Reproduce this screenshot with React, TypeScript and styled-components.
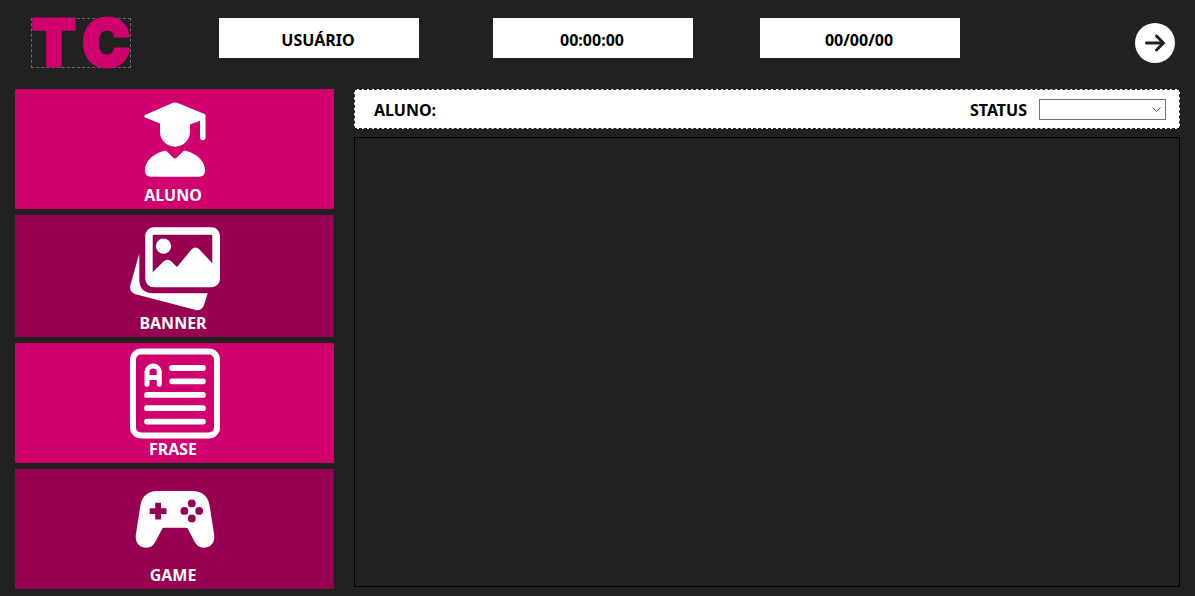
import React from "react";
import styled, { createGlobalStyle } from "styled-components";

const GlobalStyle = createGlobalStyle`
  *, *::before, *::after { box-sizing: border-box; }
  body {
    margin: 0;
    background: #212121;
    font-family: "Noto Sans", "Open Sans", sans-serif;
    font-size: 16px;
    line-height: 22px;
    font-weight: 700;
    color: #000;
  }
  button, select { font: inherit; color: inherit; }
`;

const Page = styled.div`
  display: flex;
  flex-direction: column;
  gap: 21px;
  min-height: 100vh;
  padding: 18px 15px 7px;
`;

const Header = styled.header`
  display: flex;
  align-items: flex-start;
  padding: 0 5px 0 16px;
`;

const Logo = styled.div`
  display: flex;
  align-items: center;
  justify-content: space-between;
  width: 100px;
  height: 50px;
  margin-right: 88px;
  border: 1px dashed #6c6c6c;
  color: #d1006f;
  font-family: Inter, sans-serif;
  font-size: 64px;
  font-weight: 900;
  line-height: 48px;
  -webkit-text-stroke: 3px #d1006f;
`;

const Field = styled.div<{ $gap: number }>`
  display: flex;
  align-items: center;
  justify-content: center;
  width: 200px;
  height: 40px;
  margin-right: ${(p) => p.$gap}px;
  padding: 3px 2px 0 0;
  background: #fff;
`;

const ExitButton = styled.button`
  display: flex;
  align-items: center;
  justify-content: center;
  width: 40px;
  height: 40px;
  margin: 5px 0 0 auto;
  padding: 0;
  border: 0;
  border-radius: 50%;
  background: #fff;
  color: #212121;
  cursor: pointer;
`;

const Body = styled.div`
  display: grid;
  grid-template-columns: 319px 1fr;
  gap: 20px;
`;

const Sidebar = styled.nav`
  display: flex;
  flex-direction: column;
  gap: 6px;
`;

const Tile = styled.button<{ $dark?: boolean; $top?: number }>`
  display: flex;
  flex-direction: column;
  align-items: center;
  padding: ${(p) => p.$top ?? 5}px 3px 3px 0;
  border: 0;
  background: ${(p) => (p.$dark ? "#980051" : "#d1006f")};
  color: #fff;
  cursor: pointer;
`;

const TileIcon = styled.svg`
  display: block;
  width: 90px;
  height: 90px;
  margin-left: 3px;
  overflow: visible;
`;

const Main = styled.main`
  display: flex;
  flex-direction: column;
  gap: 8px;
  padding-bottom: 2px;
`;

const StudentBar = styled.div`
  display: flex;
  align-items: center;
  justify-content: space-between;
  height: 40px;
  padding: 1px 13px 0 19px;
  border: 1px dashed #212121;
  background: #fff;
`;

const StatusGroup = styled.div`
  display: flex;
  align-items: center;
  gap: 12px;
`;

const SelectBox = styled.div`
  display: grid;
  align-items: center;
  width: 127px;

  > * { grid-area: 1 / 1; }
`;

const StatusSelect = styled.select`
  width: 100%;
  height: 21px;
  padding: 0 20px 0 4px;
  border: 1px solid #707070;
  border-radius: 0;
  background: #fff;
  appearance: none;
  font-size: 12px;
  line-height: 18px;
`;

const Chevron = styled.svg`
  justify-self: end;
  width: 9px;
  height: 5px;
  margin-right: 5px;
  pointer-events: none;
`;

const Content = styled.section`
  flex: 1;
  border: 1px solid #000;
`;

const StudentIcon = () => (
  <TileIcon viewBox="0 0 90 90" fill="#fff" aria-hidden="true">
    <path d="M43 8.8Q45 8 47 8.8L74.500 20Q76 20.800 75.500 22V43.500A2.700 2.700 0 0 1 70 43.500V26.700L60 30.500V37.700A15 15 0 0 1 30 37.700V29.500L15 23.500Q13.200 22.300 15 21Z" />
    <path d="M33.500 57Q35.500 56 37 57.500L43.300 63.800Q45 65.200 46.700 63.800L53 57.500Q54.500 56 56.500 57C67 60 75 67 75 76.500Q75 82.700 69 82.700H21Q15 82.700 15 76.500C15 67 23 60 33.500 57Z" />
  </TileIcon>
);

const PicturesIcon = () => (
  <TileIcon viewBox="0 0 90 90" fill="#fff" aria-hidden="true">
    <path
      fillRule="evenodd"
      d="M24 5.300H81.500A8.500 8.500 0 0 1 90 13.800V56.800A8.500 8.500 0 0 1 81.500 65.300H24A8.500 8.500 0 0 1 15.300 56.800V13.800A8.500 8.500 0 0 1 24 5.300ZM24 12.700Q22.700 12.700 22.700 14V50.300L33.500 39.500Q37.500 36 41.500 39.500L47 45L61.500 27.500Q65.500 23.500 69.500 27.500L82.300 41.300V14Q82.300 12.700 81 12.700Z"
    />
    <circle cx="33.500" cy="24.200" r="7.600" />
    <path d="M9.300 31.500V58C9.300 66 14.500 71.300 22.500 71.300H77.700L74 83Q72 89 66 88L5.500 72.200Q-1 70 0.300 63.500Z" />
  </TileIcon>
);

const PhraseIcon = () => (
  <TileIcon
    viewBox="0 0 90 90"
    fill="none"
    stroke="#fff"
    strokeWidth="6"
    strokeLinecap="round"
    strokeLinejoin="round"
    aria-hidden="true"
  >
    <rect x="3" y="3.500" width="84" height="84" rx="8" />
    <path d="M42 20H73M42 33.300H73M17 46.900H73M17 60.200H73M17 73.600H73" strokeWidth="5.800" />
    <path d="M17 36.300V23.500A6.200 6.200 0 0 1 29.300 23.500V36.300M17 29.500H29.300" strokeWidth="5" />
  </TileIcon>
);

const GameIcon = () => (
  <TileIcon viewBox="0 0 90 90" aria-hidden="true">
    <path
      fill="#fff"
      d="M27 17H63C71.500 17 78 22 79.500 31L84.200 61C85 69 80 73.700 73.500 73.700Q67.500 73.700 64.500 67.500L57.500 54.300Q57 53.700 56 53.700H34Q33 53.700 32.500 54.300L25.500 67.500Q22.500 73.700 16.500 73.700C10 73.700 5 69 5.800 61L10.500 31C12 22 18.500 17 27 17Z"
    />
    <g fill="#980051">
      <path d="M25.200 28.700H31V34.200H36.500V40H31V45.500H25.200V40H19.700V34.200H25.200Z" />
      <circle cx="61.800" cy="29.400" r="3.900" />
      <circle cx="54.400" cy="36.900" r="3.900" />
      <circle cx="69.200" cy="36.900" r="3.900" />
      <circle cx="61.800" cy="44.400" r="3.900" />
    </g>
  </TileIcon>
);

export default function App() {
  return (
    <>
      <GlobalStyle />
      <Page>
        <Header>
          <Logo>
            <span>T</span>
            <span>C</span>
          </Logo>
          <Field $gap={74}>USUÁRIO</Field>
          <Field $gap={67}>00:00:00</Field>
          <Field $gap={20}>00/00/00</Field>
          <ExitButton type="button" aria-label="Sair">
            <svg
              width="40"
              height="40"
              viewBox="0 0 40 40"
              fill="none"
              stroke="currentColor"
              strokeWidth="3"
              strokeLinecap="round"
              strokeLinejoin="round"
              aria-hidden="true"
            >
              <path d="M11.500 20H28.500M21.500 13L28.500 20L21.500 27" />
            </svg>
          </ExitButton>
        </Header>
        <Body>
          <Sidebar>
            <Tile type="button">
              <StudentIcon />
              ALUNO
            </Tile>
            <Tile type="button" $dark $top={7}>
              <PicturesIcon />
              BANNER
            </Tile>
            <Tile type="button">
              <PhraseIcon />
              FRASE
            </Tile>
            <Tile type="button" $dark>
              <GameIcon />
              GAME
            </Tile>
          </Sidebar>
          <Main>
            <StudentBar>
              <span>ALUNO:</span>
              <StatusGroup>
                <label htmlFor="status">STATUS</label>
                <SelectBox>
                  <StatusSelect id="status" />
                  <Chevron viewBox="0 0 9 5" fill="none" stroke="#444" aria-hidden="true">
                    <path d="M0.500 0.500L4.500 4.300L8.500 0.500" />
                  </Chevron>
                </SelectBox>
              </StatusGroup>
            </StudentBar>
            <Content />
          </Main>
        </Body>
      </Page>
    </>
  );
}
